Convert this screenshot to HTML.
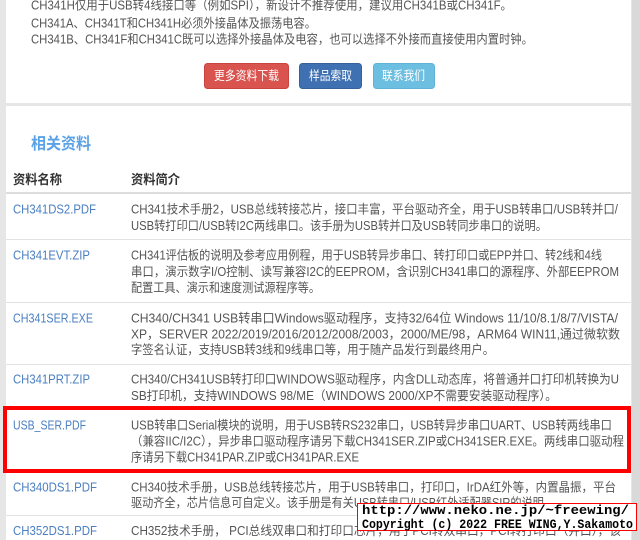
<!DOCTYPE html>
<html><head><meta charset="utf-8"><style>
*{margin:0;padding:0}
body{width:640px;height:540px;overflow:hidden;background:#e6e6e6}
svg{display:block}
text{font-family:"Liberation Sans","Noto Sans CJK SC",sans-serif;font-size:12.5px;fill:#555}
.n{fill:#4a7fc1}
.h{font-weight:bold;fill:#333;font-size:13px}
.b{fill:#fff;font-size:12.5px}
.m{font-family:"Liberation Mono",monospace;font-size:13px;fill:#000;font-weight:bold}
</style></head><body>
<svg width="640" height="540" viewBox="0 0 640 540" xmlns="http://www.w3.org/2000/svg">
<rect x="6" y="0" width="625" height="103" fill="#fff"/>
<rect x="6" y="106" width="625" height="434" fill="#fff"/>
<rect x="632" y="0" width="8" height="540" fill="#d9d9d9"/>
<text x="31" y="9.5" textLength="481" lengthAdjust="spacingAndGlyphs">CH341H仅用于USB转4线接口等（例如SPI），新设计不推荐使用，建议用CH341B或CH341F。</text>
<text x="31" y="27.5" textLength="285" lengthAdjust="spacingAndGlyphs">CH341A、CH341T和CH341H必须外接晶体及振荡电容。</text>
<text x="31" y="43.5" textLength="502" lengthAdjust="spacingAndGlyphs">CH341B、CH341F和CH341C既可以选择外接晶体及电容，也可以选择不外接而直接使用内置时钟。</text>
<rect x="204.5" y="63.5" width="84" height="25" rx="3" fill="#d9534f" stroke="#c9443f"/>
<rect x="299.5" y="63.5" width="62" height="25" rx="3" fill="#3f70b1" stroke="#36629c"/>
<rect x="373.5" y="63.5" width="61" height="25" rx="3" fill="#6cbfe0" stroke="#5fb3d6"/>
<text class="b" x="214" y="80" textLength="65" lengthAdjust="spacingAndGlyphs">更多资料下载</text>
<text class="b" x="309" y="80" textLength="43" lengthAdjust="spacingAndGlyphs">样品索取</text>
<text class="b" x="382" y="80" textLength="43" lengthAdjust="spacingAndGlyphs">联系我们</text>
<text x="31" y="149" style="font-size:16px;font-weight:bold;fill:#5aa1e6" textLength="60" lengthAdjust="spacingAndGlyphs">相关资料</text>
<text class="h" x="13" y="184" textLength="49" lengthAdjust="spacingAndGlyphs">资料名称</text>
<text class="h" x="131" y="184" textLength="49" lengthAdjust="spacingAndGlyphs">资料简介</text>
<rect x="6" y="192" width="625" height="2" fill="#ddd"/>

<text class="n" x="13" y="213.5" textLength="83" lengthAdjust="spacingAndGlyphs">CH341DS2.PDF</text>
<text x="131" y="213.5" textLength="487" lengthAdjust="spacingAndGlyphs">CH341技术手册2，USB总线转接芯片，接口丰富，平台驱动齐全，用于USB转串口/USB转并口/</text>
<text x="131" y="230" textLength="416" lengthAdjust="spacingAndGlyphs">USB转打印口/USB转I2C两线串口。该手册为USB转并口及USB转同步串口的说明。</text>
<rect x="6" y="239" width="625" height="1" fill="#e2e2e2"/>

<text class="n" x="13" y="259.5" textLength="77" lengthAdjust="spacingAndGlyphs">CH341EVT.ZIP</text>
<text x="131" y="259.5" textLength="471" lengthAdjust="spacingAndGlyphs">CH341评估板的说明及参考应用例程，用于USB转异步串口、转打印口或EPP并口、转2线和4线</text>
<text x="131" y="276" textLength="488" lengthAdjust="spacingAndGlyphs">串口，演示数字I/O控制、读写兼容I2C的EEPROM，含识别CH341串口的源程序、外部EEPROM</text>
<text x="131" y="292" textLength="189" lengthAdjust="spacingAndGlyphs">配置工具、演示和速度测试源程序等。</text>
<rect x="6" y="302" width="625" height="1" fill="#e2e2e2"/>

<text class="n" x="13" y="322.5" textLength="80" lengthAdjust="spacingAndGlyphs">CH341SER.EXE</text>
<text x="131" y="322.5" textLength="487" lengthAdjust="spacingAndGlyphs">CH340/CH341 USB转串口Windows驱动程序，支持32/64位 Windows 11/10/8.1/8/7/VISTA/</text>
<text x="131" y="338.5" textLength="489" lengthAdjust="spacingAndGlyphs">XP，SERVER 2022/2019/2016/2012/2008/2003，2000/ME/98，ARM64 WIN11,通过微软数</text>
<text x="131" y="354" textLength="363" lengthAdjust="spacingAndGlyphs">字签名认证，支持USB转3线和9线串口等，用于随产品发行到最终用户。</text>
<rect x="6" y="364" width="625" height="1" fill="#e2e2e2"/>

<text class="n" x="13" y="383.5" textLength="77" lengthAdjust="spacingAndGlyphs">CH341PRT.ZIP</text>
<text x="131" y="383.5" textLength="488" lengthAdjust="spacingAndGlyphs">CH340/CH341USB转打印口WINDOWS驱动程序，内含DLL动态库，将普通并口打印机转换为U</text>
<text x="131" y="400" textLength="426" lengthAdjust="spacingAndGlyphs">SB打印机，支持WINDOWS 98/ME（WINDOWS 2000/XP不需要安装驱动程序）。</text>

<rect x="5" y="408" width="624" height="63" fill="none" stroke="#f00" stroke-width="4"/>
<text class="n" x="13" y="429.5" textLength="73" lengthAdjust="spacingAndGlyphs">USB_SER.PDF</text>
<text x="131" y="429.5" textLength="481" lengthAdjust="spacingAndGlyphs">USB转串口Serial模块的说明，用于USB转RS232串口，USB转异步串口UART、USB转两线串口</text>
<text x="131" y="445.5" textLength="493" lengthAdjust="spacingAndGlyphs">（兼容IIC/I2C），异步串口驱动程序请另下载CH341SER.ZIP或CH341SER.EXE。两线串口驱动程</text>
<text x="131" y="461.5" textLength="228" lengthAdjust="spacingAndGlyphs">序请另下载CH341PAR.ZIP或CH341PAR.EXE</text>

<text class="n" x="13" y="491.5" textLength="84" lengthAdjust="spacingAndGlyphs">CH340DS1.PDF</text>
<text x="131" y="491.5" textLength="485" lengthAdjust="spacingAndGlyphs">CH340技术手册，USB总线转接芯片，用于USB转串口，打印口，IrDA红外等，内置晶振，平台</text>
<text x="131" y="507" textLength="424" lengthAdjust="spacingAndGlyphs">驱动齐全，芯片信息可自定义。该手册是有关USB转串口/USB红外适配器SIR的说明。</text>
<rect x="6" y="515" width="625" height="1" fill="#e2e2e2"/>
<text class="n" x="13" y="535" textLength="84" lengthAdjust="spacingAndGlyphs">CH352DS1.PDF</text>
<text x="131" y="535" textLength="490" lengthAdjust="spacingAndGlyphs">CH352技术手册， PCI总线双串口和打印口芯片，用于PCI转双串口，PCI转打印口（并口），该</text>

<rect x="357.5" y="503.5" width="279" height="27" fill="#fff" stroke="#f00"/>
<text class="m" x="362" y="514" textLength="267" lengthAdjust="spacingAndGlyphs">http://www.neko.ne.jp/~freewing/</text>
<text class="m" x="362" y="528" textLength="271" lengthAdjust="spacingAndGlyphs">Copyright (c) 2022 FREE WING,Y.Sakamoto</text>
</svg>
</body></html>
